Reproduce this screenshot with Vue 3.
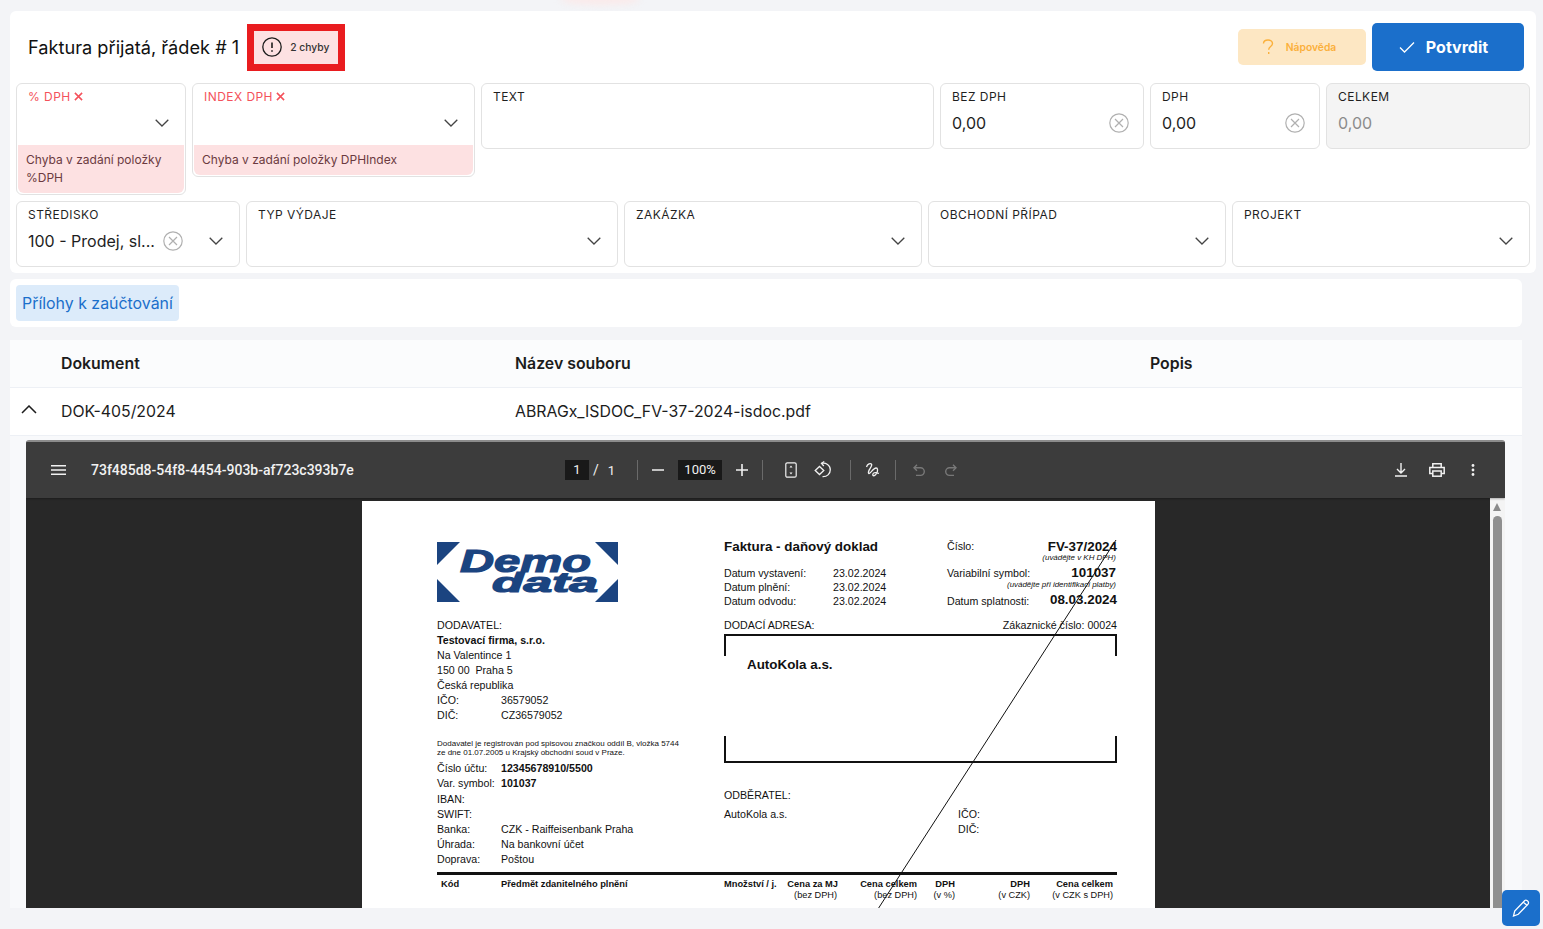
<script setup>
const topFields = [
  { label: "% DPH", width: "170px", error: "Chyba v zadání položky %DPH", select: true },
  { label: "INDEX DPH", width: "283px", error: "Chyba v zadání položky DPHIndex", select: true },
  { label: "TEXT", width: "453px" },
  { label: "BEZ DPH", width: "204px", value: "0,00", clear: true },
  { label: "DPH", width: "170px", value: "0,00", clear: true },
  { label: "CELKEM", width: "204px", value: "0,00", disabled: true },
];
const bottomFields = [
  { label: "STŘEDISKO", width: "224px", value: "100 - Prodej, sl...", clear: true, select: true },
  { label: "TYP VÝDAJE", width: "372px", select: true },
  { label: "ZAKÁZKA", width: "298px", select: true },
  { label: "OBCHODNÍ PŘÍPAD", width: "298px", select: true },
  { label: "PROJEKT", width: "298px", select: true },
];

// souradnice na strance PDF (x, stred radku y), r = zarovnani vpravo
const pdfTexts = [
  { x: 437, y: 625, t: "DODAVATEL:" },
  { x: 437, y: 640, t: "Testovací firma, s.r.o.", c: "b" },
  { x: 437, y: 655, t: "Na Valentince 1" },
  { x: 437, y: 670, t: "150 00  Praha 5" },
  { x: 437, y: 685, t: "Česká republika" },
  { x: 437, y: 700, t: "IČO:" },
  { x: 501, y: 700, t: "36579052" },
  { x: 437, y: 715, t: "DIČ:" },
  { x: 501, y: 715, t: "CZ36579052" },
  { x: 437, y: 744, t: "Dodavatel je registrován pod spisovou značkou oddíl B, vložka 5744", c: "s" },
  { x: 437, y: 753, t: "ze dne 01.07.2005 u Krajský obchodní soud v Praze.", c: "s" },
  { x: 437, y: 768, t: "Číslo účtu:" },
  { x: 501, y: 768, t: "12345678910/5500", c: "b" },
  { x: 437, y: 783, t: "Var. symbol:" },
  { x: 501, y: 783, t: "101037", c: "b" },
  { x: 437, y: 799, t: "IBAN:" },
  { x: 437, y: 814, t: "SWIFT:" },
  { x: 437, y: 829, t: "Banka:" },
  { x: 501, y: 829, t: "CZK - Raiffeisenbank Praha" },
  { x: 437, y: 844, t: "Úhrada:" },
  { x: 501, y: 844, t: "Na bankovní účet" },
  { x: 437, y: 859, t: "Doprava:" },
  { x: 501, y: 859, t: "Poštou" },
  { x: 724, y: 547, t: "Faktura - daňový doklad", c: "h" },
  { x: 724, y: 573, t: "Datum vystavení:" },
  { x: 833, y: 573, t: "23.02.2024" },
  { x: 724, y: 587, t: "Datum plnění:" },
  { x: 833, y: 587, t: "23.02.2024" },
  { x: 724, y: 601, t: "Datum odvodu:" },
  { x: 833, y: 601, t: "23.02.2024" },
  { x: 947, y: 546, t: "Číslo:" },
  { r: 1117, y: 547, t: "FV-37/2024", c: "h" },
  { r: 1116, y: 558, t: "(uvádějte v KH DPH)", c: "i" },
  { x: 947, y: 573, t: "Variabilní symbol:" },
  { r: 1116, y: 573, t: "101037", c: "h" },
  { r: 1116, y: 585, t: "(uvádějte při identifikaci platby)", c: "i" },
  { x: 947, y: 601, t: "Datum splatnosti:" },
  { r: 1117, y: 600, t: "08.03.2024", c: "h" },
  { x: 724, y: 625, t: "DODACÍ ADRESA:" },
  { r: 1117, y: 625, t: "Zákaznické číslo: 00024" },
  { x: 747, y: 665, t: "AutoKola a.s.", c: "h" },
  { x: 724, y: 795, t: "ODBĚRATEL:" },
  { x: 724, y: 814, t: "AutoKola a.s." },
  { x: 958, y: 814, t: "IČO:" },
  { x: 958, y: 829, t: "DIČ:" },
  { x: 441, y: 884, t: "Kód", c: "th" },
  { x: 501, y: 884, t: "Předmět zdanitelného plnění", c: "th" },
  { x: 724, y: 884, t: "Množství / j.", c: "th" },
  { r: 838, y: 884, t: "Cena za MJ", c: "th" },
  { r: 837, y: 895, t: "(bez DPH)", c: "td" },
  { r: 917, y: 884, t: "Cena celkem", c: "th" },
  { r: 917, y: 895, t: "(bez DPH)", c: "td" },
  { r: 955, y: 884, t: "DPH", c: "th" },
  { r: 955, y: 895, t: "(v %)", c: "td" },
  { r: 1030, y: 884, t: "DPH", c: "th" },
  { r: 1030, y: 895, t: "(v CZK)", c: "td" },
  { r: 1113, y: 884, t: "Cena celkem", c: "th" },
  { r: 1113, y: 895, t: "(v CZK s DPH)", c: "td" },
];
const pdfStyle = (item) => {
  const pos = { top: item.y - 501 - 7 + "px" };
  if (item.r) pos.right = 1155 - item.r + "px";
  else pos.left = item.x - 362 + "px";
  return pos;
};
</script>

<template>
  <div class="page">
    <div class="top-glow"></div>

    <section class="card form-card">
      <header class="head">
        <h1>Faktura přijatá, řádek # 1</h1>
        <div class="err-badge">
          <svg width="20" height="20" viewBox="0 0 20 20" fill="none" stroke="#1c1c1c" stroke-width="1.3">
            <circle cx="10" cy="10" r="9.2" />
            <path d="M10 5.5v5.5" stroke-width="1.6" />
            <path d="M10 13.2v1.5" stroke-width="1.6" />
          </svg>
          <span>2 chyby</span>
        </div>
        <button class="btn-help">
          <svg width="12" height="16" viewBox="0 0 12 16" fill="none" stroke="#fbb03b" stroke-width="1.4">
            <path d="M1.5 4.5C1.6 2.4 3.4 1 6 1c2.500 0 4.500 1.400 4.500 3.500 0 3-3.800 3-3.800 6.200" />
            <path d="M6.700 13v2" />
          </svg>
          <span>Nápověda</span>
        </button>
        <button class="btn-confirm">
          <svg width="16" height="12" viewBox="0 0 16 12" fill="none" stroke="#fff" stroke-width="1.3">
            <path d="M1 6.500l4.500 4.500L15 1.500" />
          </svg>
          <span>Potvrdit</span>
        </button>
      </header>

      <div class="row row-top">
        <div v-for="f in topFields" :key="f.label" class="field" :class="{ invalid: f.error, off: f.disabled }" :style="{ width: f.width }">
          <div class="field-main">
            <label>
              {{ f.label }}
              <svg v-if="f.error" width="9" height="9" viewBox="0 0 10 10" fill="none" stroke="#f4515b" stroke-width="1.700">
                <path d="M1 1l8 8M9 1l-8 8" />
              </svg>
            </label>
            <div class="control">
              <span class="value">{{ f.value }}</span>
              <svg v-if="f.clear" class="clear" width="20" height="20" viewBox="0 0 20 20" fill="none" stroke="#b0b0b0" stroke-width="1.200">
                <circle cx="10" cy="10" r="9.200" />
                <path d="M6 6l8 8M14 6l-8 8" />
              </svg>
              <svg v-if="f.select" class="chevron" width="14" height="8" viewBox="0 0 14 8" fill="none" stroke="#444" stroke-width="1.300">
                <path d="M.7.7L7 7 13.300.7" />
              </svg>
            </div>
          </div>
          <div v-if="f.error" class="error">{{ f.error }}</div>
        </div>
      </div>

      <div class="row">
        <div v-for="f in bottomFields" :key="f.label" class="field" :style="{ width: f.width }">
          <div class="field-main">
            <label>{{ f.label }}</label>
            <div class="control">
              <span class="value">{{ f.value }}</span>
              <svg v-if="f.clear" class="clear clear-mid" width="20" height="20" viewBox="0 0 20 20" fill="none" stroke="#b0b0b0" stroke-width="1.200">
                <circle cx="10" cy="10" r="9.200" />
                <path d="M6 6l8 8M14 6l-8 8" />
              </svg>
              <svg class="chevron" width="14" height="8" viewBox="0 0 14 8" fill="none" stroke="#444" stroke-width="1.300">
                <path d="M.7.7L7 7 13.300.7" />
              </svg>
            </div>
          </div>
        </div>
      </div>
    </section>

    <section class="card tabs-card">
      <a class="tab">Přílohy k zaúčtování</a>
    </section>

    <section class="card table-card">
      <div class="t-row t-head">
        <span class="c-doc">Dokument</span>
        <span class="c-file">Název souboru</span>
        <span>Popis</span>
      </div>
      <div class="t-row">
        <svg class="collapse" width="16" height="9" viewBox="0 0 16 9" fill="none" stroke="#1c1c1c" stroke-width="1.500">
          <path d="M1 8l7-7 7 7" />
        </svg>
        <span class="c-doc">DOK-405/2024</span>
        <span class="c-file">ABRAGx_ISDOC_FV-37-2024-isdoc.pdf</span>
      </div>

      <div class="viewer-wrap">
        <div class="viewer">
          <div class="toolbar">
            <div class="tb-left">
              <svg width="16" height="12" viewBox="0 0 16 12" fill="#f1f1f1"><path d="M0 1h15v1.500H0zM0 5.200h15v1.500H0zM0 9.500h15V11H0z" /></svg>
              <span class="doc-name">73f485d8-54f8-4454-903b-af723c393b7e</span>
            </div>
            <div class="tb-center">
              <span class="num-box page-box">1</span>
              <span class="pg-slash">/</span>
              <span class="pg-total">1</span>
              <i class="sep sep-a"></i>
              <svg class="ic ic-minus" width="12" height="12" viewBox="0 0 12 12" fill="#f1f1f1"><path d="M0 5.200h12v1.600H0z" /></svg>
              <span class="num-box zoom-box">100%</span>
              <svg class="ic ic-plus" width="12" height="12" viewBox="0 0 12 12" fill="#f1f1f1"><path d="M0 5.200h12v1.600H0z" /><path d="M5.200 0h1.600v12H5.200z" /></svg>
              <i class="sep sep-b"></i>
              <svg class="ic ic-fit" width="12" height="16" viewBox="0 0 12 16" fill="none" stroke="#f1f1f1" stroke-width="1.200">
                <rect x=".8" y=".8" width="10.400" height="14.400" rx="1.500" />
                <path d="M6 3.500L4.500 5.500h3zM6 12.500l-1.500-2h3z" fill="#f1f1f1" stroke="none" />
              </svg>
              <svg class="ic ic-rotate" width="18" height="18" viewBox="0 0 18 18" fill="none" stroke="#f1f1f1" stroke-width="1.300">
                <path d="M1.200 9.500L5.500 5.500l4.300 4-4.300 4z" />
                <path d="M7.500 2.300c4.500-.8 8.800 1.800 8.800 6.500 0 4-3.300 7.200-7.800 6.900" />
                <path d="M10.300 .5L7.500 2.300l2.300 2.700" />
              </svg>
              <i class="sep sep-c"></i>
              <svg class="ic ic-draw" width="16" height="16" viewBox="0 0 16 16" fill="none" stroke="#f1f1f1" stroke-width="1.300">
                <path d="M1.500 5C2.500 2 5.500.8 6.500 2.200 8 4.500 2.500 8 3.500 11c.9 2.400 4.500-4.800 7.500-5 2-.1 2 3 .5 5.500-1.500 2.700-4 3-3.700.8.300-2 3.500-2 6.200-1" />
              </svg>
              <i class="sep sep-d"></i>
              <svg class="ic ic-undo" width="12" height="13" viewBox="0 0 12 13" fill="none" stroke="#787878" stroke-width="1.400">
                <path d="M4 .8L1 3.800l3 3" />
                <path d="M1 3.800h6.500a3.800 3.800 0 0 1 0 7.600H3" />
              </svg>
              <svg class="ic ic-redo" width="12" height="13" viewBox="0 0 12 13" fill="none" stroke="#787878" stroke-width="1.400">
                <path d="M8 .8l3 3-3 3" />
                <path d="M11 3.800H4.500a3.800 3.800 0 0 0 0 7.600H9" />
              </svg>
            </div>
            <div class="tb-right">
              <svg class="ic-download" width="12" height="14" viewBox="0 0 12 14" fill="none" stroke="#f1f1f1" stroke-width="1.400">
                <path d="M6 0v10M2 6l4 4 4-4M0 13h12" />
              </svg>
              <svg class="ic-print" width="16" height="14" viewBox="0 0 16 14" fill="none" stroke="#f1f1f1" stroke-width="1.500">
                <path d="M3.800 4V.8h8.400V4M3.800 10.500H.8V4.500h14.400v6h-3" />
                <rect x="3.800" y="8" width="8.400" height="5.200" />
              </svg>
              <svg class="ic-more" width="4" height="12" viewBox="0 0 4 12" fill="#f1f1f1">
                <circle cx="2" cy="1.500" r="1.400" /><circle cx="2" cy="6" r="1.400" /><circle cx="2" cy="10.500" r="1.400" />
              </svg>
            </div>
          </div>

          <div class="pdf-body">
            <div class="paper">
              <svg class="logo" width="181" height="60" viewBox="0 0 181 60">
                <path d="M0 0h23L0 23zM181 0h-23l23 23zM0 60h23L0 37zM181 60h-23l23-23z" fill="#1b4480" />
                <text x="23" y="30" textLength="131" lengthAdjust="spacingAndGlyphs" class="logo-t">Demo</text>
                <text x="55" y="50" textLength="106" lengthAdjust="spacingAndGlyphs" class="logo-t logo-small">data</text>
              </svg>

              <span v-for="(item, i) in pdfTexts" :key="i" class="pt" :class="item.c" :style="pdfStyle(item)">{{ item.t }}</span>

              <div class="addr-box"></div>
              <div class="addr-box addr-bottom"></div>
              <div class="th-line"></div>

              <svg class="slash" width="793" height="407" viewBox="0 0 793 407" fill="none" stroke="#111" stroke-width="1">
                <path d="M754 39L611 261 516 408" />
              </svg>
            </div>
            <div class="scrollbar">
              <i class="arrow"></i>
              <i class="thumb"></i>
            </div>
          </div>
        </div>
      </div>
    </section>

    <button class="edit-fab">
      <svg width="18" height="18" viewBox="0 0 18 18" fill="none" stroke="#fff" stroke-width="1.300">
        <path d="M12.800 1.500c1-.7 2.500-.2 3.200.8.700 1 .6 2.100 0 2.900L6.300 15.300 1.500 17l1.200-5z" />
        <path d="M11.300 3.300l4 3.300" />
      </svg>
    </button>
  </div>
</template>

<style>
html,
body {
  margin: 0;
  background: #f3f4f7;
  overflow: hidden;
}
</style>

<style scoped>
.page {
  position: relative;
  height: 929px;
  padding: 11px 0 0 10px;
  box-sizing: border-box;
  overflow: hidden;
  font-family: Inter, "Noto Sans", sans-serif;
  color: #1b1b1b;
}
.top-glow {
  position: absolute;
  top: -6px;
  left: 560px;
  width: 80px;
  height: 11px;
  border-radius: 50%;
  background: #faeaea;
  filter: blur(3px);
}
.card {
  background: #fff;
  border-radius: 6px;
}
.form-card {
  width: 1526px;
  height: 262px;
  padding: 0 6px;
  box-sizing: border-box;
  position: relative;
}
.head {
  display: flex;
  align-items: center;
  height: 72px;
  padding-left: 12px;
  padding-right: 6px;
}
h1 {
  margin: 0;
  font-size: 18.200px;
  font-weight: 400;
  color: #111;
}
.err-badge {
  display: flex;
  align-items: center;
  gap: 8px;
  width: 98px;
  height: 47px;
  margin-left: 8px;
  padding-left: 8px;
  box-sizing: border-box;
  background: #fde1e2;
  border: 7px solid #e91c1f;
  font-size: 10.300px;
  font-weight: 500;
  color: #333;
}
button {
  font-family: inherit;
  border: 0;
}
.btn-help {
  display: flex;
  align-items: center;
  justify-content: center;
  gap: 12px;
  width: 128px;
  height: 36px;
  margin-left: auto;
  padding: 0 6px 0 0;
  border-radius: 5px;
  background: #fde7c3;
  color: #fbb03b;
  font-size: 10.300px;
  font-weight: 600;
}
.btn-confirm {
  display: flex;
  align-items: center;
  justify-content: center;
  gap: 11px;
  width: 152px;
  height: 48px;
  margin-left: 6px;
  padding: 0 9px 0 0;
  border-radius: 5px;
  background: #1b6fcb;
  color: #fff;
  font-size: 16px;
  font-weight: 700;
}
.row {
  display: flex;
  align-items: flex-start;
  gap: 6px;
}
.row-top {
  height: 118px;
}
.field {
  box-sizing: border-box;
  border: 1px solid #e2e2e2;
  border-radius: 6px;
  background: #fff;
  overflow: hidden;
}
.field-main {
  height: 64px;
  padding: 0 11px;
  box-sizing: border-box;
  position: relative;
}
.field label {
  display: flex;
  align-items: center;
  gap: 3px;
  height: 25px;
  box-sizing: border-box;
  font-size: 12px;
  letter-spacing: 0.45px;
  color: #1f1f1f;
}
.invalid label {
  color: #f4515b;
}
.invalid {
  padding: 0 1px 1px;
}
.invalid .field-main {
  height: 61px;
  padding: 0 10px;
}
.control {
  display: flex;
  align-items: center;
  height: 28px;
}
.value {
  font-size: 16px;
  white-space: nowrap;
  color: #1e1e1e;
}
.off {
  background: #f4f4f4;
}
.off .value {
  color: #8b8b8b;
}
.clear {
  margin-left: auto;
  margin-right: 3px;
}
.clear-mid {
  margin-left: 8px;
  margin-right: 0;
}
.chevron {
  margin-left: auto;
  margin-right: 5px;
}
.invalid .chevron {
  margin-right: 5px;
}
.error {
  padding: 6px 8px;
  border-radius: 0 0 6px 6px;
  background: #fde1e2;
  color: #6b3a3f;
  font-size: 12px;
  line-height: 18px;
}
.tabs-card {
  width: 1512px;
  height: 48px;
  margin-top: 6px;
  padding: 6px;
  box-sizing: border-box;
}
.tab {
  display: inline-block;
  height: 36px;
  line-height: 37px;
  padding: 0 6px;
  border-radius: 4px;
  background: #dcebfa;
  color: #1b6fcb;
  font-size: 15.900px;
}
.table-card {
  width: 1512px;
  height: 568px;
  margin-top: 13px;
  background: #f8f9fb;
  border-radius: 0;
  overflow: hidden;
}
.t-row {
  position: relative;
  display: flex;
  align-items: center;
  height: 48px;
  padding: 0 0 0 51px;
  background: #fff;
  border-bottom: 1px solid #edf0f5;
  box-sizing: border-box;
  font-size: 15.850px;
  color: #1c1c1c;
}
.t-head {
  font-weight: 600;
  background: #fbfcfd;
}
.c-doc {
  width: 454px;
}
.c-file {
  width: 635px;
}
.collapse {
  position: absolute;
  left: 11px;
  top: 17px;
}
.viewer-wrap {
  padding: 4px 0 0 16px;
  height: 472px;
  box-sizing: border-box;
}
.viewer {
  width: 1479px;
  height: 468px;
  border-top: 2px solid #8c8c8c;
  border-radius: 3px 3px 0 0;
  box-sizing: border-box;
  background: #282828;
  overflow: hidden;
}
.toolbar {
  display: flex;
  align-items: center;
  height: 56px;
  background: #3c3c3c;
  color: #f1f1f1;
  box-shadow: 0 1px 2px rgba(0, 0, 0, 0.3);
  position: relative;
  z-index: 1;
}
.tb-left {
  display: flex;
  align-items: center;
  width: 539px;
  padding-left: 25px;
  box-sizing: border-box;
}
.doc-name {
  margin-left: 24px;
  font-family: Roboto, sans-serif;
  font-size: 14px;
  font-weight: 500;
}
.tb-center {
  display: flex;
  align-items: center;
  font-family: Roboto, sans-serif;
  font-size: 13px;
}
.num-box {
  height: 20px;
  line-height: 20px;
  text-align: center;
  background: #191919;
}
.page-box {
  width: 24px;
}
.zoom-box {
  width: 44px;
  margin-left: 14px;
}
.pg-slash {
  margin-left: 4px;
  font-size: 14px;
}
.pg-total {
  margin-left: 9px;
}
.sep {
  display: block;
  width: 1px;
  height: 20px;
  background: #6a6a6a;
}
.sep-a {
  margin-left: 22px;
}
.ic-minus {
  margin-left: 14px;
}
.ic-plus {
  margin-left: 14px;
}
.sep-b {
  margin-left: 14px;
}
.ic-fit {
  margin-left: 22px;
}
.ic-rotate {
  margin-left: 17px;
}
.sep-c {
  margin-left: 18px;
}
.ic-draw {
  margin-left: 14px;
}
.sep-d {
  margin-left: 14px;
}
.ic-undo {
  margin-left: 17px;
}
.ic-redo {
  margin-left: 20px;
}
.tb-right {
  display: flex;
  align-items: center;
  margin-left: auto;
  padding-right: 30px;
}
.ic-print {
  margin-left: 22px;
}
.ic-more {
  margin-left: 26px;
}
.pdf-body {
  position: relative;
  height: 410px;
  padding-top: 3px;
  box-sizing: border-box;
}
.paper {
  position: relative;
  width: 793px;
  height: 407px;
  margin-left: 336px;
  background: #fff;
  overflow: hidden;
  font-family: "Liberation Sans", Arial, sans-serif;
  color: #111;
}
.logo {
  position: absolute;
  left: 75px;
  top: 41px;
}
.logo-t {
  font-family: "Liberation Sans", Arial, sans-serif;
  font-size: 32px;
  font-style: italic;
  font-weight: 700;
  fill: #1b4480;
  stroke: #1b4480;
  stroke-width: 1.200px;
}
.logo-small {
  font-size: 27px;
}
.pt {
  position: absolute;
  font-size: 10.650px;
  line-height: 14px;
  white-space: pre;
}
.pt.b {
  font-weight: 700;
}
.pt.h {
  font-size: 13.400px;
  font-weight: 700;
}
.pt.s {
  font-size: 8px;
}
.pt.i {
  font-size: 7.950px;
  font-style: italic;
}
.pt.th {
  font-size: 9.300px;
  font-weight: 700;
}
.pt.td {
  font-size: 9.200px;
}
.addr-box {
  position: absolute;
  left: 362px;
  top: 133px;
  width: 393px;
  height: 22px;
  box-sizing: border-box;
  border: 2px solid #111;
  border-bottom: 0;
}
.addr-bottom {
  top: 235px;
  height: 27px;
  border-top: 0;
  border-bottom: 2px solid #111;
}
.th-line {
  position: absolute;
  left: 75px;
  top: 371px;
  width: 680px;
  height: 3px;
  background: #111;
}
.slash {
  position: absolute;
  left: 0;
  top: 0;
}
.scrollbar {
  position: absolute;
  top: 0;
  right: 0;
  width: 15px;
  height: 100%;
  background: #f4f4f4;
}
.arrow {
  position: absolute;
  left: 3px;
  top: 5px;
  border-left: 4.500px solid transparent;
  border-right: 4.500px solid transparent;
  border-bottom: 8px solid #8a8a8a;
}
.thumb {
  position: absolute;
  left: 3px;
  top: 18px;
  width: 9px;
  bottom: 0;
  border-radius: 5px 5px 0 0;
  background: #8f8f8f;
}
.edit-fab {
  position: absolute;
  left: 1502px;
  top: 890px;
  display: flex;
  align-items: center;
  justify-content: center;
  width: 38px;
  height: 36px;
  border-radius: 5px;
  background: #1b6fcb;
  padding: 0;
}
</style>
